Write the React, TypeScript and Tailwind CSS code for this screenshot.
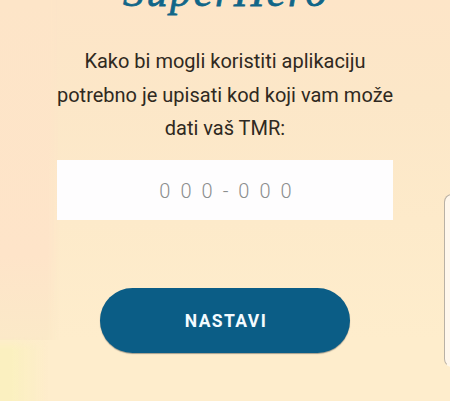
export default function App() {
  return (
    <main className="relative flex h-[401px] w-[450px] flex-col items-center overflow-hidden bg-[#fdebcb] bg-[linear-gradient(180deg,#fde5c8_0%,#fce7c8_25%,#fdeaca_55%,#feedcc_85%)] font-['Roboto',sans-serif]">
      <div className="absolute top-0 left-0 h-[340px] w-[60px] bg-[linear-gradient(180deg,#fde5c8_0%,#fee4c9_75%,#fbe9c8_100%)] mask-r-from-80%" />
      <div className="absolute bottom-0 left-0 h-[64px] w-12 bg-linear-to-r from-[#fbf0c0] from-25% to-[#feedcc]/0 mask-t-from-80%" />
      <h1 className="relative -mt-[33px] h-[50px] pl-[2px] font-['Liberation_Serif',serif] text-[42px] leading-[50px] tracking-[2.6px] whitespace-nowrap text-[#116688] italic [-webkit-text-stroke:0.8px_#116688]">
        SuperHero
      </h1>
      <p className="relative mt-[28px] text-center text-[20px] leading-[33.6px] whitespace-nowrap text-[#2f2921]">
        Kako bi mogli koristiti aplikaciju
        <br />
        potrebno je upisati kod koji vam može
        <br />
        dati vaš TMR:
      </p>
      <input
        aria-label="Kod"
        placeholder="000-000"
        className="relative mt-[14px] h-[60px] w-[336px] shrink-0 bg-[#fefdfe] pt-[3px] pl-[11px] text-center text-[20px] font-light tracking-[10px] outline-none placeholder:text-[#8b8e8e]"
      />
      <button className="relative mt-[68px] h-[65px] w-[250px] shrink-0 rounded-full bg-[#0b5d86] pt-[2px] pl-[2px] text-[17.5px] font-bold tracking-[1.4px] text-[#f4fbff] shadow-[0_1px_1px_#a49e8e]">
        NASTAVI
      </button>
      <div className="absolute top-[194px] left-[444px] h-[173px] w-5 rounded-lg border border-[#b9b1a5] border-b-[#fff8ec] bg-[#fff7ec]" />
    </main>
  );
}
